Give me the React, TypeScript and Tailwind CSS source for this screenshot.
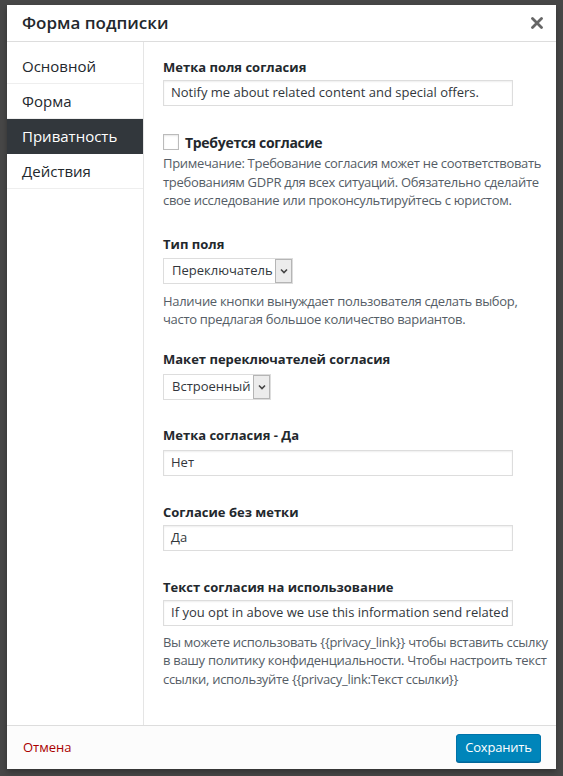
import React from 'react';

const tabs = ['Основной', 'Форма', 'Приватность', 'Действия'];

function Label({ children, className = '' }: { children: React.ReactNode; className?: string }) {
  return <div className={`text-[13px] leading-[18px] font-bold text-[#23282d] ${className}`}>{children}</div>;
}

function TextInput({ value, className = '' }: { value: string; className?: string }) {
  return (
    <div className={`w-[350px] h-[26px] border border-[#ddd] bg-white shadow-[inset_0_1px_2px_rgba(0,0,0,0.07)] px-[7px] flex items-center overflow-hidden whitespace-nowrap text-[13px] text-[#32373c] ${className}`}>
      {value}
    </div>
  );
}

function Select({ value, width, className = '' }: { value: string; width: string; className?: string }) {
  return (
    <div className={`${width} h-[26px] border border-[#ddd] bg-white flex items-center justify-between pl-[8px] text-[13px] text-[#32373c] ${className}`}>
      <span>{value}</span>
      <span className="w-[17px] h-[24px] border border-[#b5b5b5] bg-[#ececec] flex items-center justify-center">
        <svg width="8" height="6" viewBox="0 0 8 6">
          <path d="M1 1.5 L4 4.5 L7 1.5" fill="none" stroke="#444" strokeWidth="1.6" />
        </svg>
      </span>
    </div>
  );
}

export default function App() {
  return (
    <div className="h-[776px] w-[563px] bg-[#474747] pt-[5px] pb-[7px] px-[7px] flex" style={{ fontFamily: '"Open Sans", "Noto Sans", sans-serif' }}>
      <div className="flex-1 bg-white flex flex-col shadow-[0_3px_6px_rgba(0,0,0,0.3)]">
        {/* Header */}
        <div className="h-[37px] shrink-0 border-b border-[#ddd] flex items-center justify-between pl-[15px] pr-[12px]">
          <h1 className="text-[17px] font-semibold text-[#23282d]">Форма подписки</h1>
          <svg width="12" height="12" viewBox="0 0 12 12" className="mr-[1px]">
            <path d="M1.5 1.5 L10.5 10.5 M10.5 1.5 L1.5 10.5" stroke="#666" strokeWidth="2.8" strokeLinecap="round" />
          </svg>
        </div>

        {/* Body */}
        <div className="flex-1 flex min-h-0">
          <div className="w-[137px] shrink-0 border-r border-[#e5e5e5] pt-[7px]">
            {tabs.map(t => (
              <div
                key={t}
                className={`h-[35px] flex items-center pl-[15px] text-[15px] border-b ${
                  t === 'Приватность' ? 'bg-[#32373c] text-white border-[#32373c]' : 'text-[#23282d] border-[#eee]'
                }`}
              >
                {t}
              </div>
            ))}
          </div>

          <div className="flex-1 pl-[19px] pt-[16px] text-[#555d66]">
            <Label>Метка поля согласия</Label>
            <TextInput value="Notify me about related content and special offers." className="mt-[4px]" />

            <div className="flex items-center gap-[6px] mt-[27px] h-[18px]">
              <span className="w-[16px] h-[16px] border border-[#bbb] bg-white shadow-[inset_0_1px_2px_rgba(0,0,0,0.1)]" />
              <span className="text-[14px] font-bold tracking-[-0.3px] text-[#23282d]">Требуется согласие</span>
            </div>
            <p className="mt-[3px] text-[13px] tracking-[-0.3px] leading-[18.5px] w-[386px]">
              Примечание: Требование согласия может не соответствовать требованиям GDPR для всех ситуаций. Обязательно сделайте свое исследование или проконсультируйтесь с юристом.
            </p>

            <Label className="mt-[25px]">Тип поля</Label>
            <Select value="Переключатель" width="w-[130px]" className="mt-[5px]" />
            <p className="mt-[8px] text-[13px] tracking-[-0.3px] leading-[18px] w-[386px]">
              Наличие кнопки вынуждает пользователя сделать выбор, часто предлагая большое количество вариантов.
            </p>

            <Label className="mt-[22px]">Макет переключателей согласия</Label>
            <Select value="Встроенный" width="w-[108px]" className="mt-[6px]" />

            <Label className="mt-[26px]">Метка согласия - Да</Label>
            <TextInput value="Нет" className="mt-[6px]" />

            <Label className="mt-[27px]">Согласие без метки</Label>
            <TextInput value="Да" className="mt-[4px]" />

            <Label className="mt-[27px]">Текст согласия на использование</Label>
            <TextInput value="If you opt in above we use this information send related content" className="mt-[4px]" />
            <p className="mt-[7px] text-[13px] tracking-[-0.3px] leading-[18.5px] w-[386px]">
              Вы можете использовать {'{{privacy_link}}'} чтобы вставить ссылку в вашу политику конфиденциальности. Чтобы настроить текст ссылки, используйте {'{{privacy_link:Текст ссылки}}'}
            </p>
          </div>
        </div>

        {/* Footer */}
        <div className="h-[44px] shrink-0 border-t border-[#ddd] bg-[#fcfcfc] flex items-center justify-between pl-[16px] pr-[15px]">
          <span className="text-[13px] text-[#a00]">Отмена</span>
          <button className="h-[28px] w-[85px] rounded-[3px] bg-[#0085ba] border border-[#0073aa] text-white text-[13px] tracking-[-0.2px] shadow-[0_1px_0_#006799]">
            Сохранить
          </button>
        </div>
      </div>
    </div>
  );
}
